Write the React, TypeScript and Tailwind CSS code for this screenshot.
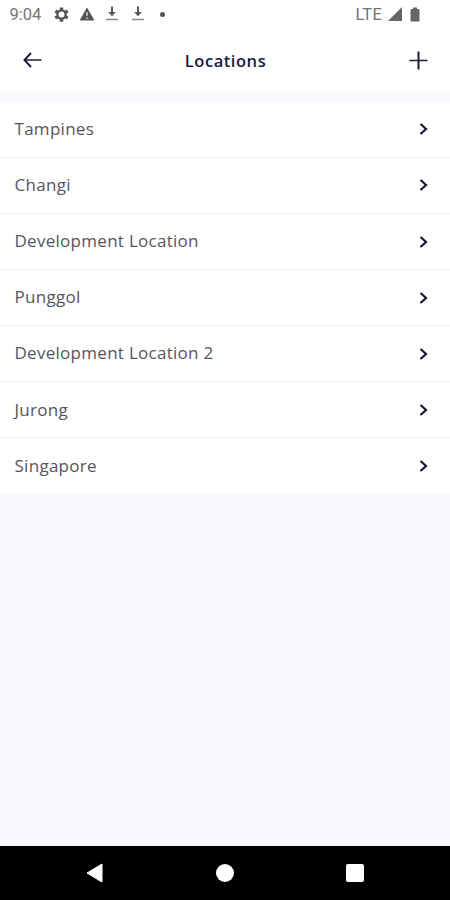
const locations = [
  'Tampines',
  'Changi',
  'Development Location',
  'Punggol',
  'Development Location 2',
  'Jurong',
  'Singapore',
]

function DownloadIcon() {
  return (
    <svg width="12" height="16" viewBox="0 0 12 16" fill="none">
      <path d="M6 0.5v8" stroke="#555" strokeWidth="2" />
      <path d="M2.2 6h7.6L6 10.3z" fill="#555" />
      <path d="M0 13.5h12" stroke="#8c8c8c" strokeWidth="1.6" />
    </svg>
  )
}

function StatusBar() {
  return (
    <div className="flex h-7 items-center justify-between pl-[9.5px] pr-[30px] text-[#757575]">
      <div className="flex items-center">
        <span className="w-[44px] pt-0.5 font-['Roboto',sans-serif] text-[16.5px] leading-none">9:04</span>
        <svg width="15" height="15" viewBox="2 2 20 20" fill="none" stroke="#555">
          <circle cx="12" cy="12" r="5.4" strokeWidth="3" />
          <path
            d="M12 2.5v4M12 17.5v4M3.77 7.25l3.46 2M16.77 14.75l3.46 2M3.77 16.75l3.46-2M16.77 9.25l3.46-2"
            strokeWidth="4.6"
          />
        </svg>
        <svg className="ml-[10.5px]" width="16" height="14" viewBox="0 0 16 14">
          <path d="M8 0.5L15.5 13.5H0.5z" fill="#555" />
          <path d="M8 5v4M8 10.5v1.5" stroke="#ddd" strokeWidth="1.3" />
        </svg>
        <span className="ml-[11px]">
          <DownloadIcon />
        </span>
        <span className="ml-[14px]">
          <DownloadIcon />
        </span>
        <span className="ml-[16px] size-[5px] rounded-full bg-[#555]" />
      </div>
      <div className="flex items-center">
        <span className="pt-0.5 font-['Roboto',sans-serif] text-[16.5px] leading-none tracking-[0.2px]">LTE</span>
        <svg className="ml-[6px]" width="14" height="14" viewBox="0 0 14 14">
          <path d="M14 0v14H0z" fill="#666" />
        </svg>
        <svg className="ml-[8px]" width="10" height="15" viewBox="0 0 10 15">
          <path d="M3 0.5h4v1.5h1.5a1 1 0 0 1 1 1v10.5a1 1 0 0 1-1 1h-7a1 1 0 0 1-1-1V3a1 1 0 0 1 1-1H3z" fill="#666" />
        </svg>
      </div>
    </div>
  )
}

function Header() {
  return (
    <header className="flex h-16 items-center justify-between pl-[23px] pr-[22px] text-[#1b1b3d]">
      <button aria-label="Back">
        <svg width="19" height="16" viewBox="0 0 19 16" fill="none" stroke="currentColor">
          <path d="M1.5 8H18.5" strokeWidth="1.5" />
          <path d="M8 1L1.5 8l6.5 7" strokeWidth="2" />
        </svg>
      </button>
      <h1 className="pt-0.5 text-[16.5px] font-semibold leading-none tracking-[0.55px]">Locations</h1>
      <button aria-label="Add location">
        <svg width="19" height="19" viewBox="0 0 19 19" fill="none" stroke="currentColor">
          <path d="M9.5 0.5v18" strokeWidth="2" />
          <path d="M0.5 9.5h18" strokeWidth="1.5" />
        </svg>
      </button>
    </header>
  )
}

function LocationRow({ name }: { name: string }) {
  return (
    <li className="flex h-[56.1px] items-center justify-between border-b border-[#f1f1f3] pl-[14.5px] pr-[22px] last:border-b-0">
      <span className="pb-[1.5px] text-[17px] leading-none tracking-[0.28px] text-[#55555c]">{name}</span>
      <svg width="9" height="12" viewBox="0 0 9 12" fill="none" stroke="#17172b" strokeWidth="2.2">
        <path d="M1.5 1L7 6l-5.5 5" />
      </svg>
    </li>
  )
}

function NavBar() {
  return (
    <nav className="flex h-[54px] items-center justify-between bg-black px-[86px]">
      <svg width="18" height="20" viewBox="0 0 18 20">
        <path d="M1 10L16 1v18z" fill="#fff" stroke="#fff" strokeLinejoin="round" />
      </svg>
      <span className="size-[18px] rounded-full bg-white" />
      <span className="size-[18px] rounded-[2px] bg-white" />
    </nav>
  )
}

export default function App() {
  return (
    <div className="flex h-[900px] w-[450px] flex-col overflow-hidden bg-[#f7f9fd] font-['Open_Sans',sans-serif]">
      <div className="bg-white">
        <StatusBar />
        <Header />
      </div>
      <ul className="mt-[9.8px] bg-white">
        {locations.map((name) => (
          <LocationRow key={name} name={name} />
        ))}
      </ul>
      <div className="flex-1" />
      <NavBar />
    </div>
  )
}
